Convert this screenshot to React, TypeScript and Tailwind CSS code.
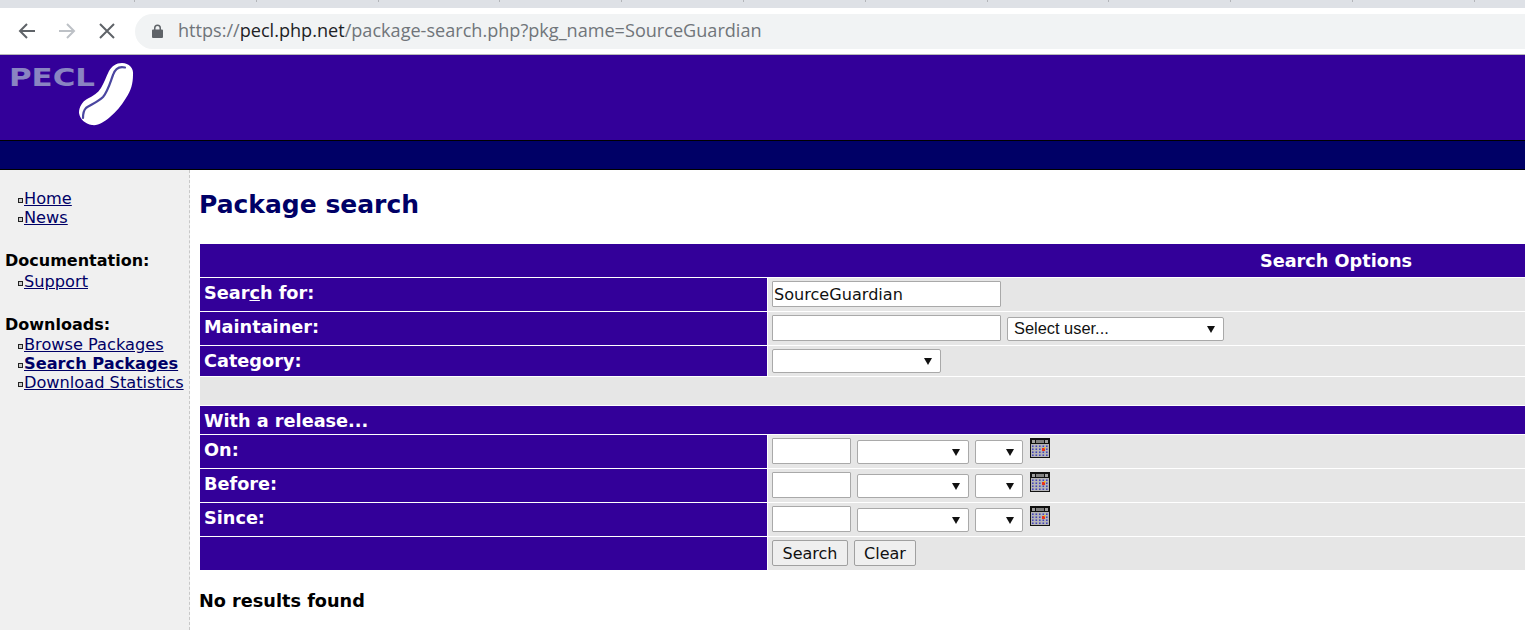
import type { ReactNode } from "react";

const labelClass = "w-[567px] shrink-0 bg-[#330099] px-1 pt-[4px] text-[17.7px] font-bold leading-[22px] text-white";
const tabTicks = Array.from({ length: 12 }, (_, i) => i);

function Arrow() {
  return (
    <svg width="8" height="8" viewBox="0 0 8 8" className="shrink-0">
      <path d="M0 1h8L4 8z" fill="#111" />
    </svg>
  );
}

function FakeSelect({ w, h = "h-[24px]", text, mt = "" }: { w: string; h?: string; text?: string; mt?: string }) {
  return (
    <div
      className={`${w} ${h} ${mt} flex shrink-0 items-center justify-between rounded-[2px] border border-[#a9a9a9] bg-white pl-[6px] pr-[8px] font-['Liberation_Sans',sans-serif] text-[16.4px] text-[#111]`}
    >
      <span className="-mt-[2px]">{text}</span>
      <Arrow />
    </div>
  );
}

function TextBox({ w, value }: { w: string; value?: string }) {
  return (
    <div className={`${w} flex h-[26px] shrink-0 items-center rounded-[1px] border border-[#a9a9a9] bg-white pl-[1px] text-[16.1px] text-[#111]`}>
      {value}
    </div>
  );
}

function CalendarIcon() {
  const dots = [];
  for (let r = 0; r < 4; r++) {
    for (let c = 0; c < 5; c++) {
      dots.push(<rect key={`${r}-${c}`} x={2 + c * 3.5} y={7.5 + r * 3} width="1.6" height="1.4" fill="#3838bc" />);
    }
  }
  return (
    <svg width="20" height="20" viewBox="0 0 20 20" className="ml-[7px] shrink-0">
      <rect width="20" height="20" fill="#111" />
      <rect x="1" y="6" width="18" height="13" fill="#b4b4b8" />
      <rect x="2" y="2" width="3" height="3" fill="#a0a0a0" />
      <rect x="6" y="2" width="8" height="3" fill="#808080" />
      <rect x="15" y="2" width="3" height="3" fill="#a0a0a0" />
      {dots}
      <rect x="12" y="10" width="3" height="3" fill="#e8301c" />
      <rect x="14" y="9" width="1.5" height="1.5" fill="#f2c018" />
    </svg>
  );
}

function Row({ label, h, children }: { label?: ReactNode; h: string; children?: ReactNode }) {
  return (
    <div className={`flex ${h} gap-px`}>
      <div className={labelClass}>{label}</div>
      <div className="flex grow items-start bg-[#e6e6e6] pl-[4px]">{children}</div>
    </div>
  );
}

function DateRow({ label }: { label: string }) {
  return (
    <Row label={label} h="h-[33px]">
      <div className="mt-[3px] flex items-start">
        <TextBox w="w-[79px]" />
        <FakeSelect w="w-[112px] ml-[6px]" mt="mt-[2px]" />
        <FakeSelect w="w-[48px] ml-[6px]" mt="mt-[2px]" />
        <CalendarIcon />
      </div>
    </Row>
  );
}

function SideLink({ children, bold }: { children: string; bold?: boolean }) {
  return (
    <div className="flex h-[19px] items-center pl-[18px]">
      <span className="mr-[1px] mt-[3px] h-[5px] w-[5px] shrink-0 border border-[#222] bg-[#ccc]" />
      <a href="#" className={`text-[#000066] underline ${bold ? "font-bold" : ""}`}>
        {children}
      </a>
    </div>
  );
}

function FormButton({ children, w }: { children: string; w: string }) {
  return (
    <div className={`${w} flex h-[26px] items-center justify-center rounded-[2px] border border-[#a0a0a0] bg-[#efefef] text-[16px] text-[#111]`}>
      {children}
    </div>
  );
}

function PeclLogo() {
  return (
    <svg width="140" height="85" viewBox="0 0 140 85" className="block">
      <text x="9" y="31" textLength="86" lengthAdjust="spacingAndGlyphs" fontFamily="DejaVu Sans" fontWeight="bold" fontSize="24" fill="#8a84c2">
        PECL
      </text>
      <path
        d="M122 8 C129 8 134 13 133 20 C133 28 131 36 126 43 C121 51 116 57 110 62 C104 67 98 71 92 70 C85 69 80 64 79 58 C79 52 82 47 87 44 C93 41 98 38 101 33 C104 28 106 22 109 16 C112 11 116 8 122 8 Z"
        fill="#fff"
      />
      <path
        d="M125 12.500 C119 11 115 14 113 20 C110 28 108 36 103 42 C98 47 90 50 86 53 C83 56 83 59 83 63"
        fill="none"
        stroke="#4a46a0"
        strokeWidth="2.200"
        strokeLinecap="round"
      />
    </svg>
  );
}

export default function App() {
  return (
    <div className="flex h-[630px] w-[1525px] flex-col overflow-hidden bg-white font-['DejaVu_Sans',sans-serif] text-[16.2px] leading-[19px] text-black">
      <div className="flex h-[8px] gap-[120.800px] bg-[#dee1e6] pl-[134px]">
        {tabTicks.map((tick) => (
          <span key={tick} className="h-[2px] w-px shrink-0 bg-[#b4b6ba]" />
        ))}
      </div>
      <div className="flex h-[47px] items-center border-b border-[#b8b8b8] bg-white">
        <svg width="20" height="20" viewBox="0 0 20 20" className="ml-[17px]" fill="none" stroke="#5f6368" strokeWidth="2">
          <path d="M18 10H3M10 3l-7 7 7 7" />
        </svg>
        <svg width="20" height="20" viewBox="0 0 20 20" className="ml-[20px]" fill="none" stroke="#bdc1c6" strokeWidth="2">
          <path d="M2 10h15M10 3l7 7-7 7" />
        </svg>
        <svg width="20" height="20" viewBox="0 0 20 20" className="ml-[20px]" fill="none" stroke="#5f6368" strokeWidth="2">
          <path d="M3 3l14 14M17 3L3 17" />
        </svg>
        <div className="ml-[18px] flex h-[35px] grow items-center rounded-l-full bg-[#f1f3f4] pl-[17px]">
          <svg width="11" height="14" viewBox="0 0 11 14" fill="#5f6368">
            <path d="M1 5.5h1V4a3.5 3.5 0 017 0v1.5h1a1 1 0 011 1V13a1 1 0 01-1 1H1a1 1 0 01-1-1V6.500a1 1 0 011-1zM3.500 5.500h4V4a2 2 0 00-4 0z" />
          </svg>
          <span className="-mt-[2px] ml-[15px] font-['Open_Sans',sans-serif] text-[18.1px] text-[#70757a]">
            https://<span className="text-[#202124]">pecl.php.net</span>/package-search.php?pkg_name=SourceGuardian
          </span>
        </div>
      </div>

      <div className="h-[85px] bg-[#330099]">
        <PeclLogo />
      </div>
      <div className="h-[30px] border-y border-black bg-[#000066]" />

      <div className="flex grow">
        <div className="w-[190px] shrink-0 border-r border-dashed border-[#c8c8c8] bg-[#f0f0f0] pt-[19px]">
          <SideLink>Home</SideLink>
          <SideLink>News</SideLink>
          <div className="mt-[24px] pl-[5px] text-[16px] font-bold">Documentation:</div>
          <div className="mt-[2px]">
            <SideLink>Support</SideLink>
          </div>
          <div className="mt-[24px] pl-[5px] text-[16px] font-bold">Downloads:</div>
          <div className="mt-[1px]">
            <SideLink>Browse Packages</SideLink>
            <SideLink bold>Search Packages</SideLink>
            <SideLink>Download Statistics</SideLink>
          </div>
        </div>

        <div className="min-w-0 grow pl-[10px]">
          <h1 className="-ml-px mt-[20px] text-[25px] font-bold leading-[30px] text-[#000066]">Package search</h1>

          <div className="mt-[24px] flex w-[2272px] flex-col gap-px">
            <div className="flex h-[33px] items-center justify-center bg-[#330099] pt-[2px] text-[17.7px] font-bold text-white">
              <span>Search Options</span>
            </div>
            <Row
              h="h-[33px]"
              label={
                <>
                  Sear<span className="underline">c</span>h for:
                </>
              }
            >
              <div className="mt-[3px]">
                <TextBox w="w-[229px]" value="SourceGuardian" />
              </div>
            </Row>
            <Row label="Maintainer:" h="h-[33px]">
              <div className="mt-[5px] flex items-start">
                <div className="-mt-[2px]">
                  <TextBox w="w-[229px]" />
                </div>
                <FakeSelect w="w-[217px] ml-[6px]" text="Select user..." />
              </div>
            </Row>
            <Row label="Category:" h="h-[30px]">
              <div className="mt-[3px]">
                <FakeSelect w="w-[169px]" />
              </div>
            </Row>
            <div className="h-[28px] bg-[#e6e6e6]" />
            <div className="flex h-[28px] items-center bg-[#330099] pl-[4px] pt-[2px] text-[17.7px] font-bold text-white">With a release...</div>
            <DateRow label="On:" />
            <DateRow label="Before:" />
            <DateRow label="Since:" />
            <Row h="h-[33px]">
              <div className="mt-[3px] flex gap-[6px]">
                <FormButton w="w-[76px]">Search</FormButton>
                <FormButton w="w-[62px]">Clear</FormButton>
              </div>
            </Row>
          </div>

          <p className="-ml-px mt-[22px] text-[17.7px] font-bold">No results found</p>
        </div>
      </div>
    </div>
  );
}
